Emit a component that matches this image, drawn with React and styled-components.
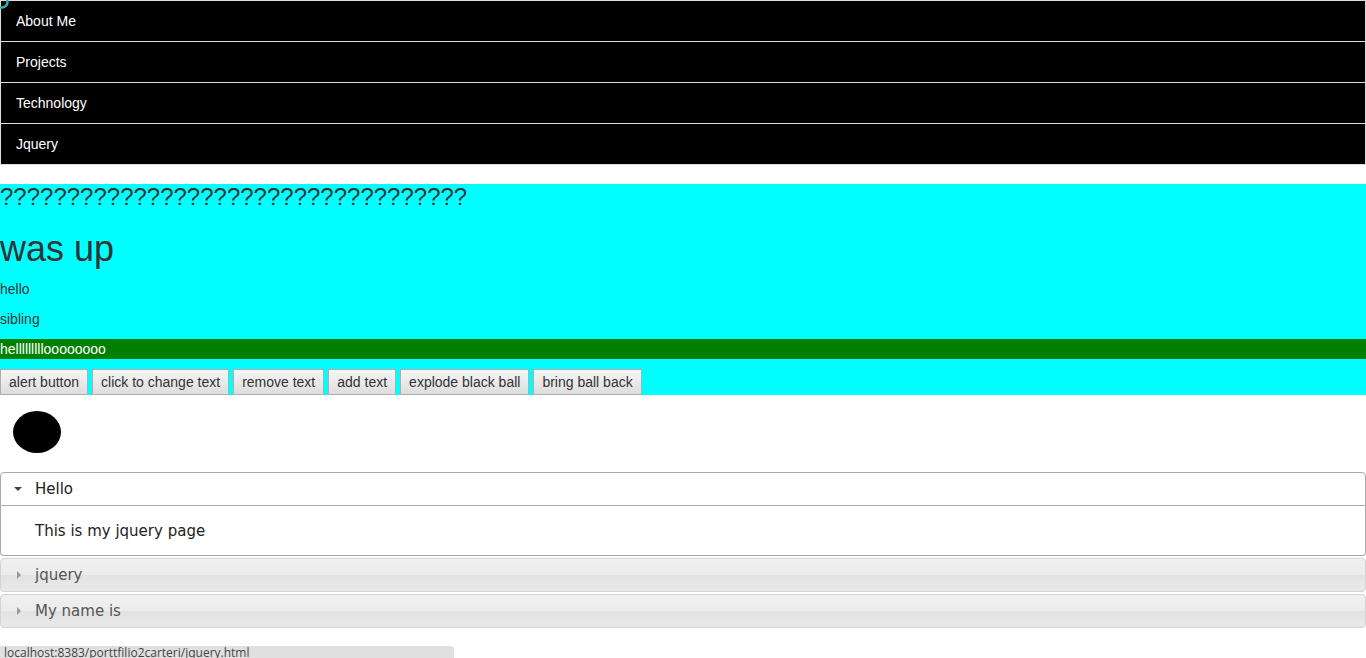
import React from "react";
import styled, { createGlobalStyle } from "styled-components";

const GlobalStyle = createGlobalStyle`
  body {
    margin: 0;
    font-family: "Liberation Sans", Arial, sans-serif;
    font-size: 14px;
    line-height: 20px;
    color: #333;
    background: #fff;
    overflow: hidden;
  }
`;

const Page = styled.div`
  position: relative;
  height: 658px;
`;

const Nav = styled.ul`
  list-style: none;
  margin: 0 0 19px;
  padding: 0;
  border-top: 1px solid #ddd;
`;

const NavItem = styled.li`
  height: 40px;
  display: flex;
  align-items: center;
  padding-left: 15px;
  background: #000;
  color: #fff;
  border: 1px solid #ddd;
  border-top: 0;
`;

const Corner = styled.svg`
  position: absolute;
  left: -6px;
  top: -6px;
`;

const CyanBox = styled.div`
  background: #00ffff;
  overflow: hidden;
`;

const Question = styled.h3`
  margin: 0 0 10px;
  font-size: 24px;
  font-weight: 400;
  line-height: 26px;
`;

const Big = styled.h1`
  margin: 19px 0 10px;
  font-size: 36px;
  font-weight: 400;
  line-height: 40px;
`;

const Para = styled.p`
  margin: 0 0 10px;
  line-height: 20px;
  background: ${(p) => (p.green ? "#008000" : "transparent")};
  color: ${(p) => (p.green ? "#fff" : "#333")};
`;

const ButtonRow = styled.div`
  display: flex;
  gap: 4px;
`;

const Button = styled.button`
  height: 26px;
  padding: 0 8px;
  font-family: "Liberation Sans", Arial, sans-serif;
  font-size: 14px;
  color: #333;
  border: 1px solid #adadad;
  border-radius: 0;
  background: linear-gradient(#f6f6f6, #dddddd);
`;

const Ball = styled.div`
  width: 48px;
  height: 42px;
  border-radius: 50%;
  background: #000;
  margin: 16px 0 19px 13px;
`;

const Accordion = styled.div`
  font-family: "DejaVu Sans", Verdana, sans-serif;
  font-size: 15px;
`;

const Header = styled.div`
  position: relative;
  height: 32px;
  display: flex;
  align-items: center;
  padding-left: 34px;
  margin-top: ${(p) => (p.first ? "0" : "2px")};
  border: 1px solid ${(p) => (p.active ? "#aaa" : "#d3d3d3")};
  border-radius: ${(p) => (p.active ? "4px 4px 0 0" : "4px")};
  color: ${(p) => (p.active ? "#212121" : "#555")};
  background: ${(p) =>
    p.active
      ? "#fff"
      : "linear-gradient(#f0f0f0 0%, #ececec 50%, #e2e2e2 51%, #e9e9e9 100%)"};
`;

const Arrow = styled.span`
  position: absolute;
  left: 13px;
  top: 50%;
  width: 0;
  height: 0;
  ${(p) =>
    p.open
      ? `
    margin-top: -2px;
    border-left: 4px solid transparent;
    border-right: 4px solid transparent;
    border-top: 4px solid #444;
  `
      : `
    margin-top: -4px;
    left: 16px;
    border-top: 4px solid transparent;
    border-bottom: 4px solid transparent;
    border-left: 4px solid #999;
  `}
`;

const Content = styled.div`
  height: 49px;
  display: flex;
  align-items: center;
  padding-left: 34px;
  color: #222;
  border: 1px solid #aaa;
  border-top: 0;
  border-radius: 0 0 4px 4px;
  margin-bottom: 1px;
`;

const Status = styled.div`
  position: absolute;
  left: 0;
  bottom: 0;
  width: 450px;
  height: 12px;
  padding-left: 4px;
  background: #e0e0e0;
  border-top-right-radius: 4px;
  font-family: "Open Sans", sans-serif;
  font-size: 12px;
  line-height: 14px;
  color: #444;
  overflow: hidden;
  white-space: nowrap;
`;

export default function App() {
  return (
    <Page>
      <GlobalStyle />
      <Nav>
        <NavItem>About Me</NavItem>
        <NavItem>Projects</NavItem>
        <NavItem>Technology</NavItem>
        <NavItem>Jquery</NavItem>
      </Nav>
      <Corner width="16" height="16" viewBox="0 0 16 16">
        <circle cx="8" cy="8" r="5.5" fill="none" stroke="#2bb5b0" strokeWidth="2.5" />
      </Corner>
      <CyanBox>
        <Question>???????????????????????????????????</Question>
        <Big>was up</Big>
        <Para>hello</Para>
        <Para>sibling</Para>
        <Para green>hellllllllloooooooo</Para>
        <ButtonRow>
          <Button>alert button</Button>
          <Button>click to change text</Button>
          <Button>remove text</Button>
          <Button>add text</Button>
          <Button>explode black ball</Button>
          <Button>bring ball back</Button>
        </ButtonRow>
      </CyanBox>
      <Ball />
      <Accordion>
        <Header first active>
          <Arrow open />
          Hello
        </Header>
        <Content>This is my jquery page</Content>
        <Header>
          <Arrow />
          jquery
        </Header>
        <Header>
          <Arrow />
          My name is
        </Header>
      </Accordion>
      <Status>localhost:8383/porttfilio2carteri/jquery.html</Status>
    </Page>
  );
}
